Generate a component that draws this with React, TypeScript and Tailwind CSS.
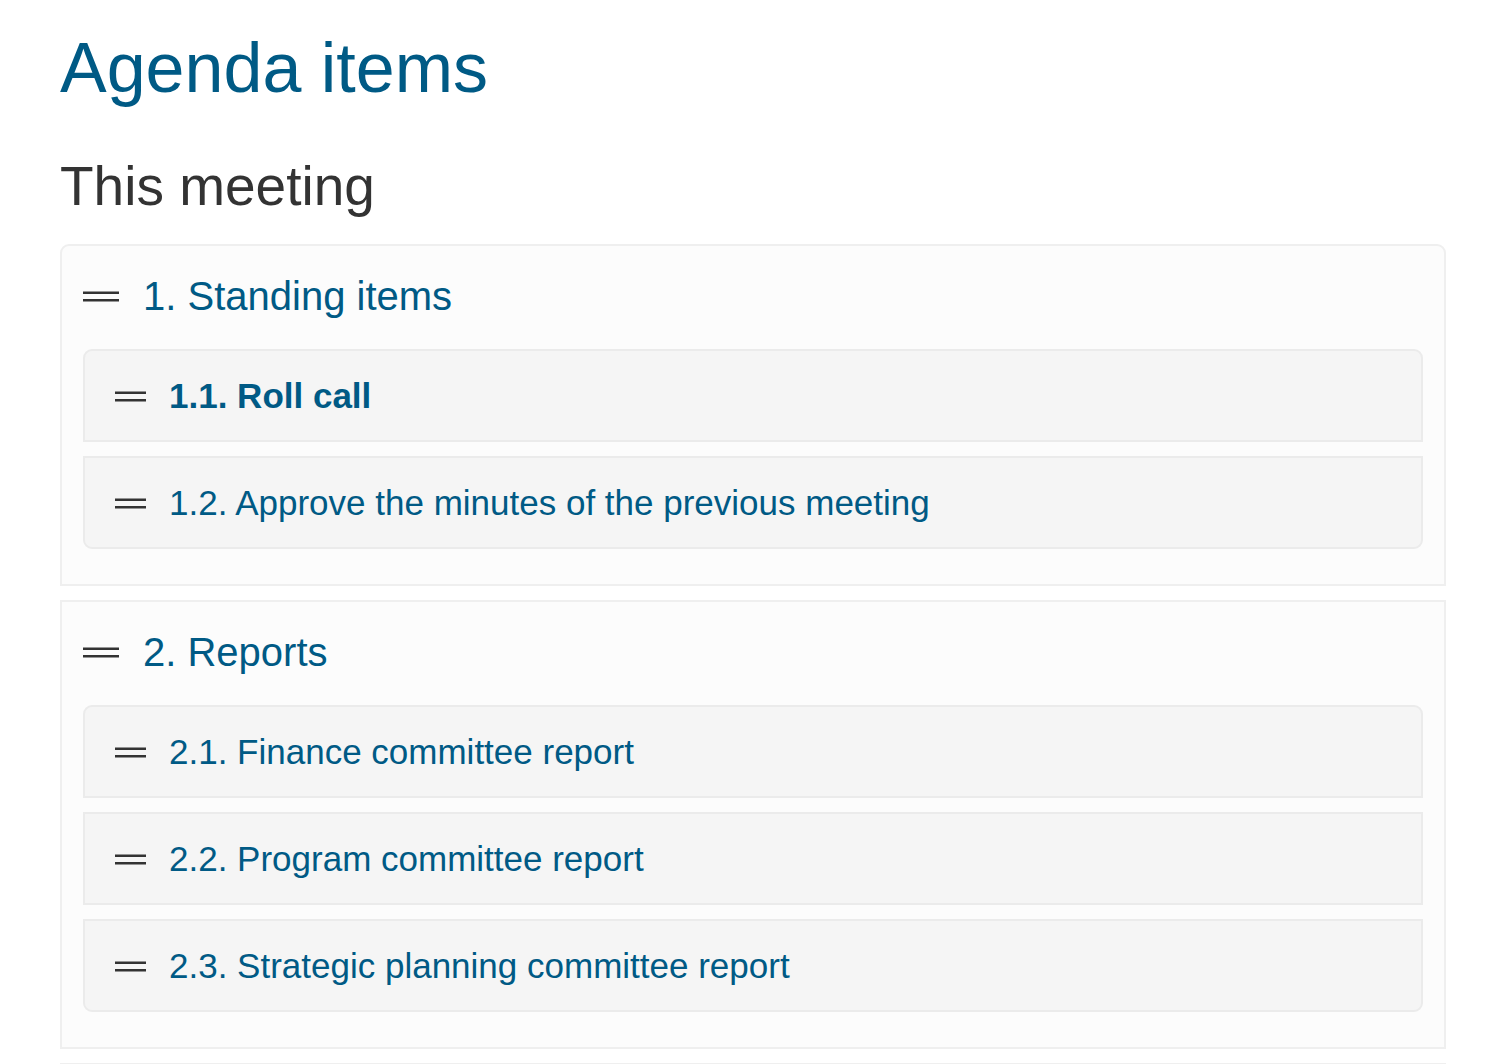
import clsx from 'clsx'

// ── 데이터 ──
interface AgendaItem {
  label: string
  active?: boolean
}

interface AgendaSection {
  title: string
  items: AgendaItem[]
}

const sections: AgendaSection[] = [
  {
    title: '1. Standing items',
    items: [
      { label: '1.1. Roll call', active: true },
      { label: '1.2. Approve the minutes of the previous meeting' },
    ],
  },
  {
    title: '2. Reports',
    items: [
      { label: '2.1. Finance committee report' },
      { label: '2.2. Program committee report' },
      { label: '2.3. Strategic planning committee report' },
    ],
  },
]

// ── 드래그 핸들 (두 줄) ──
function Handle({ width }: { width: number }) {
  return (
    <svg width={width} height={11} viewBox={`0 0 ${width} 11`} className="shrink-0" aria-hidden>
      <rect x={0} y={0.5} width={width} height={2.5} fill="#333333" />
      <rect x={0} y={8} width={width} height={2.5} fill="#333333" />
    </svg>
  )
}

function ItemRow({ item, first, last }: { item: AgendaItem; first: boolean; last: boolean }) {
  return (
    <div
      className={clsx(
        'flex items-center gap-[23px] border-2 border-[#ebebeb] bg-[#f5f5f5] pl-[30px] pr-4 pt-[25px] pb-[24px]',
        first && 'rounded-t-[9px]',
        last && 'rounded-b-[9px]',
      )}
    >
      <Handle width={31} />
      <span
        className={clsx(
          'text-[35px] leading-[40px] text-[#005a85]',
          item.active && 'font-bold',
        )}
      >
        {item.label}
      </span>
    </div>
  )
}

function Section({ section, first }: { section: AgendaSection; first: boolean }) {
  return (
    <div
      className={clsx(
        'border-2 border-[#efefef] bg-[#fcfcfc] px-[21px] pt-[28px] pb-[35px]',
        first && 'rounded-t-[9px]',
      )}
    >
      <div className="flex items-center gap-[24px]">
        <Handle width={36} />
        <span className="text-[40px] leading-[44px] text-[#005a85]">{section.title}</span>
      </div>
      <div className="mt-[31px] flex flex-col gap-[14px]">
        {section.items.map((item, i) => (
          <ItemRow
            key={item.label}
            item={item}
            first={i === 0}
            last={i === section.items.length - 1}
          />
        ))}
      </div>
    </div>
  )
}

export default function App() {
  return (
    <div
      className="min-h-screen bg-white pl-[60px] pr-[56px] pt-[30px]"
      style={{ fontFamily: '"Liberation Sans", Arial, sans-serif' }}
    >
      <h1 className="text-[70px] leading-[77px] text-[#005a85]">Agenda items</h1>
      <h2 className="mt-[49px] text-[55px] leading-[60px] text-[#333333]">This meeting</h2>

      <div className="mt-[28px] flex flex-col gap-[14px]">
        {sections.map((section, i) => (
          <Section key={section.title} section={section} first={i === 0} />
        ))}
        {/* 다음 섹션 (화면 아래로 잘림) */}
        <div className="h-[120px] border-2 border-[#efefef] bg-[#fcfcfc]" />
      </div>
    </div>
  )
}
